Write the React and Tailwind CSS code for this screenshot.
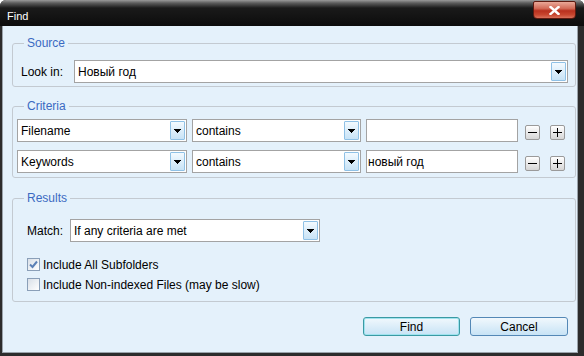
import React from "react";

function Arrow() {
  return (
    <svg width="7" height="4" viewBox="0 0 7 4" shapeRendering="crispEdges">
      <rect x="0" y="0" width="7" height="1" fill="#000" />
      <rect x="1" y="1" width="5" height="1" fill="#000" />
      <rect x="2" y="2" width="3" height="1" fill="#000" />
      <rect x="3" y="3" width="1" height="1" fill="#000" />
    </svg>
  );
}

function DropBtn() {
  return (
    <div className="w-[15px] h-[19px] shrink-0 border border-[#8fc1e6] rounded-[1px] bg-linear-to-b from-[#f3faff] to-[#c8e3f6] flex items-center justify-center">
      <Arrow />
    </div>
  );
}

function Combo({ text, className }) {
  return (
    <div className={"h-[23px] border border-[#a3a3a3] bg-white flex items-center pl-[3px] pr-[1px] " + className}>
      <span className="flex-1 whitespace-nowrap overflow-hidden">{text}</span>
      <DropBtn />
    </div>
  );
}

function SmallBtn({ plus }) {
  return (
    <div className="w-[15px] h-[15px] shrink-0 self-end mb-[2px] border border-[#9a9a9a] rounded-[2px] bg-linear-to-b from-[#ffffff] to-[#d6d6d6] flex items-center justify-center">
      <svg width="9" height="9" viewBox="0 0 9 9" shapeRendering="crispEdges">
        <rect x="0" y="4" width="9" height="1" fill="#000" />
        {plus && <rect x="4" y="0" width="1" height="9" fill="#000" />}
      </svg>
    </div>
  );
}

function Check({ checked }) {
  return (
    <div className="w-[13px] h-[13px] shrink-0 border border-[#8a9fb8] bg-linear-to-br from-[#d9e0e8] to-[#ffffff] flex items-center justify-center">
      {checked && (
        <svg width="9" height="9" viewBox="0 0 9 9">
          <path d="M1 4.5 L3.5 7 L8 1.5" fill="none" stroke="#5b80b6" strokeWidth="2" />
        </svg>
      )}
    </div>
  );
}

function Group({ title, className, children }) {
  return (
    <fieldset className={"w-[564px] ml-[9px] border border-[#c3cad1] rounded-[3px] p-0 m-0 " + className}>
      <legend className="ml-[11px] px-[3px] leading-[14px] text-[#3b6ac2]">{title}</legend>
      {children}
    </fieldset>
  );
}

export default function App() {
  return (
    <div className="w-[584px] h-[356px] bg-white font-['Liberation_Sans',Arial,sans-serif] text-[12px] leading-[14px] text-black overflow-hidden">
      <div className="w-full h-full flex flex-col bg-[#2c2c2c] rounded-t-[6px] overflow-hidden">
        {/* Title bar */}
        <div className="h-[26px] shrink-0 flex items-start bg-[linear-gradient(to_bottom,#9a9a9a_0px,#5c5c5c_3px,#1a1a1a_8px,#0c0c0c_100%)]">
          <span className="pl-[7px] pt-[10px] text-[11px] leading-[13px] text-white">Find</span>
          <div className="ml-auto mr-[8px] mt-[1px] w-[43px] h-[18px] border border-[#5e1a10] rounded-b-[4px] rounded-t-[2px] bg-[linear-gradient(to_bottom,#eaa898_0%,#d36b58_40%,#b8301e_55%,#c8462f_80%,#d9705a_100%)] flex items-center justify-center">
            <svg width="11" height="9" viewBox="0 0 11 9">
              <path d="M1.5 1 L9.5 8 M9.5 1 L1.5 8" stroke="#fff" strokeWidth="2.4" strokeLinecap="square" />
            </svg>
          </div>
        </div>

        {/* Content */}
        <div className="flex-1 ml-[2px] mr-[6px] mb-[3px] bg-[#e4f1fb] border-l border-r border-b border-[#9aa3ab] flex flex-col">
          <Group title="Source" className="mt-[10px]">
            <div className="pt-[10px] pb-[3px] pl-[8px] pr-[7px] flex items-center">
              <span className="w-[53px] shrink-0">Look in:</span>
              <Combo text="Новый год" className="flex-1" />
            </div>
          </Group>

          <Group title="Criteria" className="mt-[12px]">
            <div className="pt-[6px] pb-[4px] pl-[4px] flex flex-col gap-[8px]">
              {[
                ["Filename", ""],
                ["Keywords", "новый год"],
              ].map(([a, b]) => (
                <div key={a} className="flex items-center h-[23px]">
                  <Combo text={a} className="w-[170px]" />
                  <Combo text="contains" className="w-[169px] ml-[5px]" />
                  <div className="w-[152px] h-[23px] ml-[5px] border border-[#a3a3a3] bg-white flex items-center pl-[1px]">
                    {b}
                  </div>
                  <div className="ml-[7px] flex self-stretch">
                    <SmallBtn />
                  </div>
                  <div className="ml-[10px] flex self-stretch">
                    <SmallBtn plus />
                  </div>
                </div>
              ))}
            </div>
          </Group>

          <Group title="Results" className="mt-[13px]">
            <div className="pt-[14px] pb-[10px] pl-[14px] flex flex-col">
              <div className="flex items-center">
                <span className="w-[43px] shrink-0">Match:</span>
                <Combo text="If any criteria are met" className="w-[250px]" />
              </div>
              <div className="mt-[16px] h-[13px] flex items-center gap-[3px]">
                <Check checked />
                <span>Include All Subfolders</span>
              </div>
              <div className="mt-[7px] h-[13px] flex items-center gap-[3px]">
                <Check />
                <span>Include Non-indexed Files (may be slow)</span>
              </div>
            </div>
          </Group>

          <div className="mt-[15px] mr-[9px] flex justify-end gap-[10px]">
            <button className="w-[97px] h-[19px] rounded-[3px] border border-[#3a9aa4] shadow-[inset_0_0_0_1px_#9fe3ee] bg-linear-to-b from-[#f1f8fd] to-[#c7e3f5] flex items-center justify-center leading-[14px]">
              Find
            </button>
            <button className="w-[98px] h-[19px] rounded-[3px] border border-[#5488b6] bg-linear-to-b from-[#f1f8fd] to-[#c7e3f5] flex items-center justify-center leading-[14px]">
              Cancel
            </button>
          </div>
        </div>
      </div>
    </div>
  );
}
